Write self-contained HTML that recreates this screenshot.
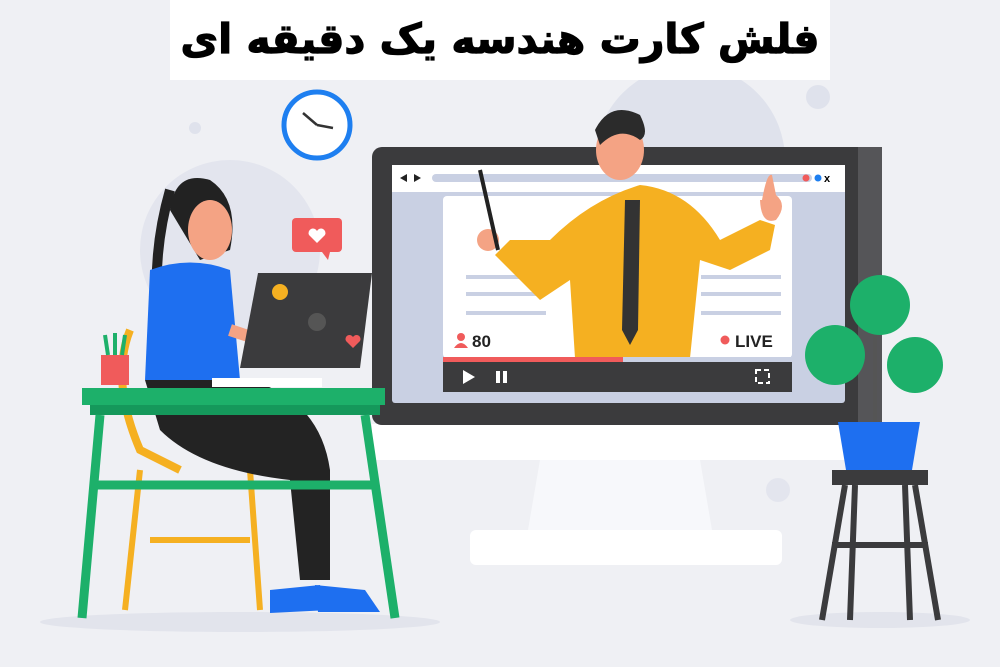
<!DOCTYPE html><html><head><meta charset="utf-8"><style>
html,body{margin:0;padding:0;width:1000px;height:667px;overflow:hidden;background:#eff0f4}
.t{position:absolute;left:170px;top:0;width:660px;height:80px;background:#fff;font-family:"DejaVu Sans","Noto Sans CJK SC",sans-serif;font-weight:bold;font-size:41px;text-align:center;line-height:78px;direction:rtl;color:#000;white-space:nowrap;-webkit-text-stroke:1.2px #000}
</style></head><body>
<svg width="1000" height="667" style="position:absolute;left:0;top:0">
<rect width="1000" height="667" fill="#eff0f4"/>
<circle cx="230" cy="250" r="90" fill="#e3e5ee"/>
<circle cx="690" cy="160" r="95" fill="#dfe2ec"/>
<circle cx="818" cy="97" r="12" fill="#dfe2ec"/>
<circle cx="195" cy="128" r="6" fill="#dfe2ec"/>
<circle cx="778" cy="490" r="12" fill="#e3e5ee"/>
<ellipse cx="240" cy="622" rx="200" ry="10" fill="#e2e4ec"/>
<ellipse cx="880" cy="620" rx="90" ry="8" fill="#e2e4ec"/>
<circle cx="317" cy="125" r="33" fill="#fff" stroke="#1e7ff0" stroke-width="5"/>
<path d="M317 125 L303 113 M317 125 L333 128" stroke="#333" stroke-width="2.5"/>
<rect x="372" y="424" width="510" height="36" fill="#fff"/>
<path d="M540 460 L700 460 L712 530 L528 530Z" fill="#f7f8fb"/>
<rect x="470" y="530" width="312" height="35" rx="6" fill="#fff"/>
<rect x="372" y="147" width="510" height="278" rx="10" fill="#3b3b3d"/>
<rect x="858" y="147" width="24" height="278" fill="#555558"/>
<rect x="392" y="165" width="453" height="238" rx="3" fill="#c9d0e3"/>
<rect x="392" y="165" width="453" height="27" fill="#fff"/>
<rect x="432" y="174" width="380" height="8" rx="4" fill="#c9d0e3"/>
<path d="M400 178l7-4v8zM414 174l7 4-7 4z" fill="#222"/>
<circle cx="806" cy="178" r="3.5" fill="#f05b5b"/><circle cx="818" cy="178" r="3.5" fill="#1e7ff0"/>
<text x="824" y="182" font-family="Liberation Sans" font-weight="bold" font-size="11">x</text>
<rect x="443" y="196" width="349" height="162" rx="4" fill="#fff"/>
<g stroke="#c9d0e3" stroke-width="4"><path d="M466 277h80M466 294h80M466 313h80M701 277h80M701 294h80M701 313h80"/></g>
<path d="M550 240 Q590 200 640 185 Q690 190 720 240 L760 220 L775 225 L770 250 L730 270 L700 260 L690 358 L575 358 L570 280 L540 300 L495 255 L510 240 Z" fill="#f5b021"/>
<path d="M625 200 L640 200 L638 330 L630 345 L622 330Z" fill="#333"/>
<ellipse cx="620" cy="150" rx="24" ry="30" fill="#f4a384"/>
<path d="M595 130 Q610 100 640 115 Q650 135 640 140 Q620 125 600 145Z" fill="#2b2b2b"/>
<circle cx="488" cy="240" r="11" fill="#f4a384"/>
<path d="M480 170 L498 250" stroke="#222" stroke-width="4"/>
<path d="M762 200 q5-28 10 -25 l4 20 q12 10 0 25 q-15 5 -16-20z" fill="#f4a384"/>
<rect x="443" y="357" width="180" height="5" fill="#f05b5b"/><rect x="623" y="357" width="169" height="5" fill="#c9d0e3"/>
<rect x="443" y="362" width="349" height="30" fill="#3b3b3d"/>
<path d="M463 370 l12 7-12 7z" fill="#fff"/><rect x="496" y="371" width="4" height="12" fill="#fff"/><rect x="503" y="371" width="4" height="12" fill="#fff"/>
<rect x="756" y="370" width="13" height="13" fill="none" stroke="#fff" stroke-width="2" stroke-dasharray="5 3"/>
<circle cx="461" cy="337" r="4" fill="#f05b5b"/><path d="M454 348 q7-10 14 0z" fill="#f05b5b"/>
<text x="472" y="347" font-family="Liberation Sans" font-weight="bold" font-size="17" fill="#222">80</text>
<circle cx="725" cy="340" r="4.5" fill="#f05b5b"/>
<text x="735" y="347" font-family="Liberation Sans" font-weight="bold" font-size="17" fill="#222">LIVE</text>
<path d="M875 425 L875 300" stroke="#555" stroke-width="4"/>
<circle cx="880" cy="305" r="30" fill="#1db06a"/>
<circle cx="835" cy="355" r="30" fill="#1db06a"/>
<circle cx="915" cy="365" r="28" fill="#1db06a"/>
<path d="M838 422 L920 422 L912 470 L846 470Z" fill="#1e6ff0"/>
<rect x="832" y="470" width="96" height="15" fill="#3b3b3d"/>
<path d="M845 485 L822 620 M915 485 L938 620 M855 485 L850 620 M905 485 L910 620 M832 545 H928" stroke="#3b3b3d" stroke-width="6"/>
<rect x="292" y="218" width="50" height="34" rx="4" fill="#f05b5b"/>
<path d="M322 252 l6 8 2-8z" fill="#f05b5b"/>
<path d="M317 243 l-8-8 a4 4 0 0 1 8-4 a4 4 0 0 1 8 4z" fill="#fff"/>
<path d="M130 330 Q110 380 140 450 L180 470" stroke="#f5b021" stroke-width="8" fill="none"/>
<path d="M140 470 L125 610 M250 470 L260 610 M150 540 H250" stroke="#f5b021" stroke-width="6"/>
<path d="M170 210 Q175 170 210 180 Q240 200 230 250 L200 260 Z" fill="#222"/>
<path d="M170 190 Q150 260 160 330" stroke="#222" stroke-width="10" fill="none"/>
<ellipse cx="210" cy="230" rx="22" ry="30" fill="#f4a384"/>
<path d="M150 270 Q190 255 230 270 L240 380 L145 380 Z" fill="#1e6ff0"/>
<path d="M145 380 L250 380 Q320 400 330 470 L330 580 L300 580 L290 480 Q200 470 160 430 Z" fill="#232323"/>
<path d="M270 590 L320 585 L330 610 L270 613Z" fill="#1e6ff0"/>
<path d="M315 585 L365 590 L380 612 L318 612Z" fill="#1e6ff0"/>
<path d="M230 330 L290 350" stroke="#f4a384" stroke-width="12"/>
<path d="M258 273 L372 273 L360 368 L240 368Z" fill="#3b3b3d"/>
<circle cx="317" cy="322" r="9" fill="#555"/>
<circle cx="280" cy="292" r="8" fill="#f5b021"/>
<path d="M353 348 l-7-7 a4 4 0 0 1 7-4 a4 4 0 0 1 7 4z" fill="#f05b5b"/>
<rect x="212" y="378" width="110" height="9" fill="#fff"/>
<rect x="101" y="355" width="28" height="30" fill="#f05b5b"/>
<path d="M108 355 l-3-20 M115 355 v-22 M122 355 l3-20" stroke="#1db06a" stroke-width="4"/>
<rect x="82" y="388" width="303" height="17" fill="#1db06a"/>
<rect x="90" y="405" width="290" height="10" fill="#15985b"/>
<path d="M100 415 L82 618 M365 415 L395 618 M96 485 H372" stroke="#1db06a" stroke-width="9"/>
</svg>
<div class="t">فلش کارت هندسه یک دقیقه ای</div>
</body></html>
